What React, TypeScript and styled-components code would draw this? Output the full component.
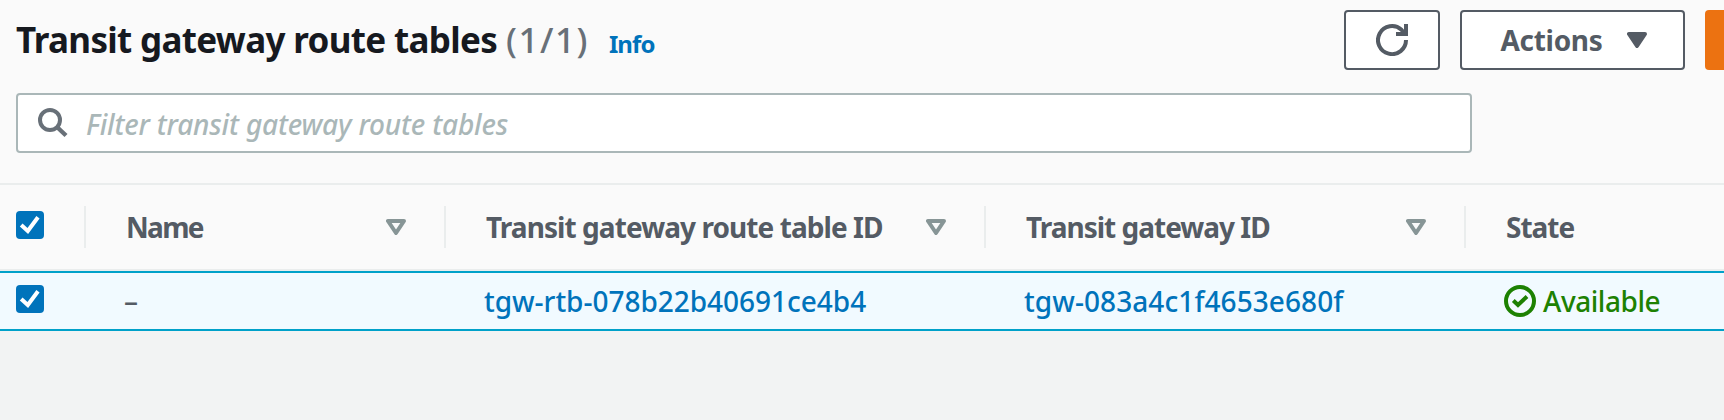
import React from 'react';
import styled, { createGlobalStyle } from 'styled-components';

const GlobalStyle = createGlobalStyle`
  *, *::before, *::after { box-sizing: border-box; }
  body {
    margin: 0;
    background: #f2f3f3;
    color: #545b64;
    font-family: "Noto Sans", "Open Sans", sans-serif;
    font-size: 28px;
    font-weight: 460;
    overflow: hidden;
  }
`;

const Page = styled.main`
  width: 1724px;
  height: 420px;
  overflow: hidden;
`;

const Panel = styled.section`
  background: #fafafa;
`;

const PanelHeader = styled.header`
  display: flex;
  flex-direction: column;
  gap: 23px;
  height: 185px;
  padding: 10px 0 0 16px;
  border-bottom: 2px solid #eaeded;
`;

const TitleBar = styled.div`
  display: flex;
  justify-content: space-between;
  height: 60px;
`;

const TitleGroup = styled.div`
  display: flex;
  align-items: baseline;
  line-height: 60px;
  white-space: nowrap;
`;

const Title = styled.h2`
  margin: 0;
  color: #16191f;
  font-size: 35px;
  font-weight: 700;
  letter-spacing: -0.67px;
`;

const Counter = styled.span`
  margin-left: 9px;
  color: #687078;
  font-size: 35px;
  letter-spacing: 1.5px;
`;

const InfoLink = styled.a`
  margin-left: 20px;
  color: #0073bb;
  font-size: 24px;
  font-weight: 700;
  letter-spacing: -0.9px;
`;

const ButtonGroup = styled.div`
  display: flex;
  flex: none;
  gap: 20px;
`;

const Button = styled.button<{ $width: number; $primary?: boolean }>`
  display: flex;
  align-items: center;
  justify-content: center;
  gap: 24px;
  width: ${(p) => p.$width}px;
  height: 60px;
  padding: 0;
  border: 2px solid ${(p) => (p.$primary ? '#ec7211' : '#545b64')};
  border-right-width: ${(p) => (p.$primary ? 0 : 2)}px;
  border-radius: ${(p) => (p.$primary ? '4px 0 0 4px' : '4px')};
  background: ${(p) => (p.$primary ? '#ec7211' : '#fff')};
  color: #545b64;
  font: 700 28px/56px "Noto Sans", "Open Sans", sans-serif;
  letter-spacing: -0.3px;
`;

const MenuButton = styled(Button)`
  padding-left: 2px;
`;

const SearchBox = styled.label`
  display: flex;
  align-items: center;
  gap: 18px;
  width: 1456px;
  height: 60px;
  padding-left: 20px;
  border: 2px solid #aab7b8;
  border-radius: 4px;
  background: #fff;
`;

const SearchInput = styled.input`
  flex: 1;
  height: 56px;
  padding: 2px 0 0;
  border: 0;
  outline: 0;
  background: transparent;
  font: italic 500 28px/54px "Noto Sans", "Open Sans", sans-serif;
  letter-spacing: -0.17px;

  &::placeholder {
    color: #aab7b8;
    opacity: 1;
  }
`;

const columns = '84px 360px 540px 480px 1fr';

const HeaderRow = styled.div`
  display: grid;
  grid-template-columns: ${columns};
  align-items: center;
  height: 86px;
  border-bottom: 2px solid #eaeded;
`;

const HeaderCell = styled.div`
  display: flex;
  align-items: center;
  justify-content: space-between;
  height: 42px;
  padding: 0 38px 0 40px;
  border-left: 2px solid #eaeded;
`;

const HeaderLabel = styled.span<{ $tracking: number }>`
  font-weight: 700;
  line-height: 42px;
  letter-spacing: ${(p) => p.$tracking}px;
  white-space: nowrap;
`;

const BodyRow = styled.div`
  display: grid;
  grid-template-columns: ${columns};
  align-items: center;
  height: 60px;
  border: solid #00a1c9;
  border-width: 2px 0;
  background: #f1faff;
`;

const CheckCell = styled.div`
  padding: 0 0 4px 16px;
  line-height: 0;
`;

const BodyCell = styled.div<{ $tracking?: number }>`
  display: flex;
  align-items: center;
  gap: 7px;
  padding-left: 40px;
  line-height: 56px;
  letter-spacing: ${(p) => p.$tracking ?? 0}px;
  white-space: nowrap;
`;

const ResourceLink = styled.a`
  color: #0073bb;
`;

const Status = styled.span`
  color: #1d8102;
`;

const Checkbox = () => (
  <svg width="28" height="28" viewBox="0 0 28 28">
    <rect width="28" height="28" rx="4" fill="#0073bb" />
    <path d="M5.2 14 L11.8 20 L22 6.2" fill="none" stroke="#fff" strokeWidth="4" />
  </svg>
);

const SortIcon = () => (
  <svg width="20" height="16" viewBox="0 0 20 16">
    <path d="M2 2 H18 L10 14 Z" fill="none" stroke="#879596" strokeWidth="4" strokeLinejoin="round" />
  </svg>
);

const CaretIcon = () => (
  <svg width="20" height="16" viewBox="0 0 20 16">
    <path d="M2 2 H18 L10 14 Z" fill="#545b64" stroke="#545b64" strokeWidth="4" strokeLinejoin="round" />
  </svg>
);

const RefreshIcon = () => (
  <svg width="32" height="32" viewBox="0 0 32 32" fill="none" stroke="#545b64" strokeWidth="4">
    <path d="M30 16 A14 14 0 1 1 25.5 5.8 L29 10" />
    <path d="M20 10 H30 V0" />
  </svg>
);

const SearchIcon = () => (
  <svg width="30" height="30" viewBox="0 0 30 30" fill="none" stroke="#687078" strokeWidth="4">
    <circle cx="12" cy="12" r="10" />
    <path d="M19 19 L28 27.5" strokeWidth="4.4" />
  </svg>
);

const SuccessIcon = () => (
  <svg width="32" height="32" viewBox="0 0 32 32" fill="none" stroke="#1d8102" strokeWidth="4">
    <circle cx="16" cy="16" r="14" />
    <path d="M9.3 15.5 L14 20 L23 11.5" />
  </svg>
);

const headings = [
  { label: 'Name', tracking: -1.7, sortable: true },
  { label: 'Transit gateway route table ID', tracking: -0.93, sortable: true },
  { label: 'Transit gateway ID', tracking: -1, sortable: true },
  { label: 'State', tracking: -1, sortable: false },
];

export default function App() {
  return (
    <Page>
      <GlobalStyle />
      <Panel>
        <PanelHeader>
          <TitleBar>
            <TitleGroup>
              <Title>Transit gateway route tables</Title>
              <Counter>(1/1)</Counter>
              <InfoLink>Info</InfoLink>
            </TitleGroup>
            <ButtonGroup>
              <Button $width={96} aria-label="Refresh">
                <RefreshIcon />
              </Button>
              <MenuButton $width={225}>
                Actions
                <CaretIcon />
              </MenuButton>
              <Button $width={19} $primary aria-label="Create" />
            </ButtonGroup>
          </TitleBar>
          <SearchBox>
            <SearchIcon />
            <SearchInput placeholder="Filter transit gateway route tables" />
          </SearchBox>
        </PanelHeader>
        <HeaderRow>
          <CheckCell>
            <Checkbox />
          </CheckCell>
          {headings.map((h) => (
            <HeaderCell key={h.label}>
              <HeaderLabel $tracking={h.tracking}>{h.label}</HeaderLabel>
              {h.sortable && <SortIcon />}
            </HeaderCell>
          ))}
        </HeaderRow>
        <BodyRow>
          <CheckCell>
            <Checkbox />
          </CheckCell>
          <BodyCell>–</BodyCell>
          <BodyCell $tracking={-0.02}>
            <ResourceLink>tgw-rtb-078b22b40691ce4b4</ResourceLink>
          </BodyCell>
          <BodyCell $tracking={0.08}>
            <ResourceLink>tgw-083a4c1f4653e680f</ResourceLink>
          </BodyCell>
          <BodyCell $tracking={-0.45}>
            <SuccessIcon />
            <Status>Available</Status>
          </BodyCell>
        </BodyRow>
      </Panel>
    </Page>
  );
}
